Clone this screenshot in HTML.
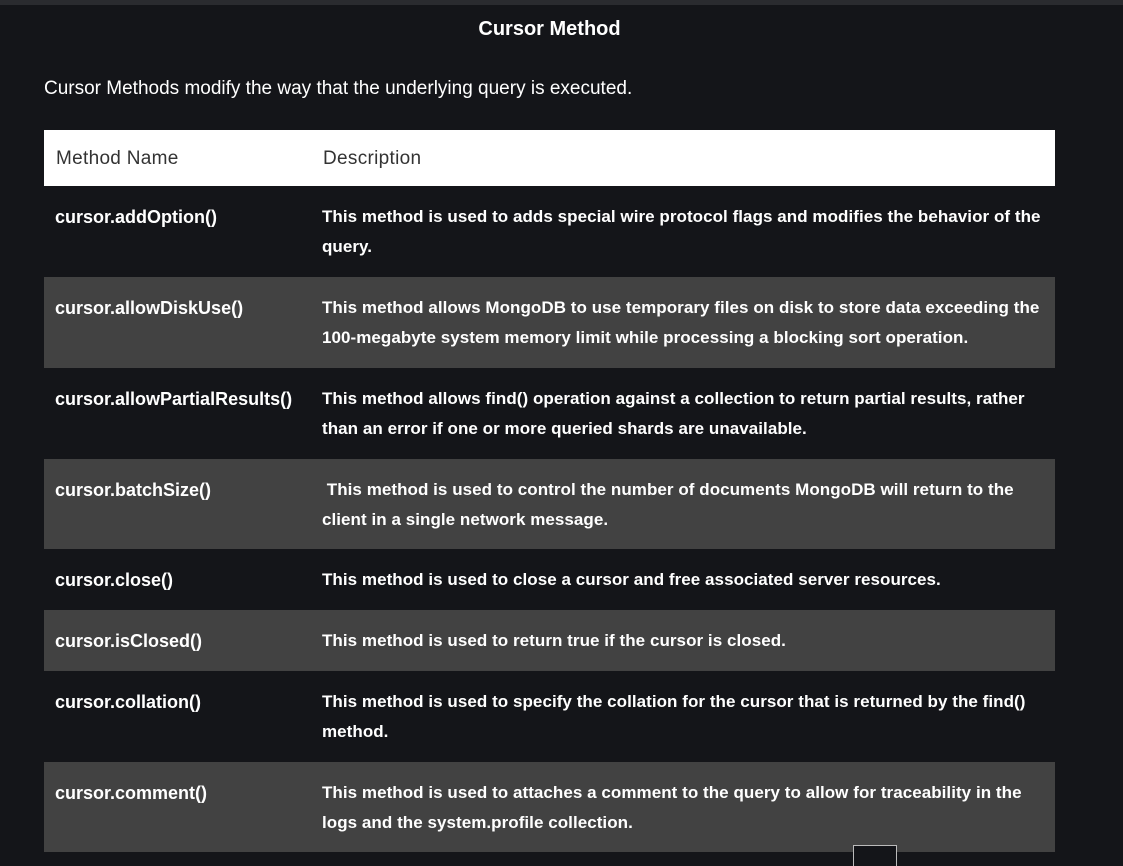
<!DOCTYPE html>
<html><head><meta charset="utf-8"><style>
html,body{margin:0;padding:0;background:#141519;width:1123px;height:866px;overflow:hidden;}
body{font-family:"Liberation Sans",sans-serif;color:#fff;position:relative;}
.top{position:absolute;left:0;top:0;width:1123px;height:5px;background:#2a2b2f;}
h1{position:absolute;top:18px;left:0;width:1099px;text-align:center;margin:0;font-size:20px;font-weight:bold;}
p.intro{position:absolute;left:44px;top:78px;margin:0;font-size:19px;}
table{position:absolute;left:44px;top:130px;width:1011px;border-collapse:collapse;table-layout:fixed;}
col.c1{width:267px;}
th{background:#fff;color:#333;font-weight:normal;text-align:left;font-size:19px;height:56px;padding:2px 0 0 12px;letter-spacing:.3px;box-sizing:border-box;}
td{vertical-align:top;font-size:17px;line-height:30px;padding:16px 0 0 11px;white-space:nowrap;box-sizing:border-box;}
td.n{font-weight:bold;font-size:18px;}
td.d{padding-left:11px;font-weight:bold;letter-spacing:.05px;}
tr.a td{background:#424242;}
.btn{position:absolute;left:853px;top:845px;width:42px;height:30px;border:1px solid #bbb;background:#141519;}
</style></head><body>
<div class="top"></div>
<h1>Cursor Method</h1>
<p class="intro">Cursor Methods modify the way that the underlying query is executed.</p>
<table>
<colgroup><col class="c1"><col></colgroup>
<tr style="height:56px"><th>Method Name</th><th>Description</th></tr>
<tr style="height:91px"><td class="n">cursor.addOption()</td><td class="d">This method is used to adds special wire protocol flags and modifies the behavior of the<br>query.</td></tr>
<tr class="a" style="height:91px"><td class="n">cursor.allowDiskUse()</td><td class="d">This method allows MongoDB to use temporary files on disk to store data exceeding the<br>100-megabyte system memory limit while processing a blocking sort operation.</td></tr>
<tr style="height:91px"><td class="n">cursor.allowPartialResults()</td><td class="d">This method allows find() operation against a collection to return partial results, rather<br>than an error if one or more queried shards are unavailable.</td></tr>
<tr class="a" style="height:90px"><td class="n">cursor.batchSize()</td><td class="d">&nbsp;This method is used to control the number of documents MongoDB will return to the<br>client in a single network message.</td></tr>
<tr style="height:61px"><td class="n">cursor.close()</td><td class="d">This method is used to close a cursor and free associated server resources.</td></tr>
<tr class="a" style="height:61px"><td class="n">cursor.isClosed()</td><td class="d">This method is used to return true if the cursor is closed.</td></tr>
<tr style="height:91px"><td class="n">cursor.collation()</td><td class="d">This method is used to specify the collation for the cursor that is returned by the find()<br>method.</td></tr>
<tr class="a" style="height:90px"><td class="n">cursor.comment()</td><td class="d">This method is used to attaches a comment to the query to allow for traceability in the<br>logs and the system.profile collection.</td></tr>
</table>
<div class="btn"></div>
</body></html>
